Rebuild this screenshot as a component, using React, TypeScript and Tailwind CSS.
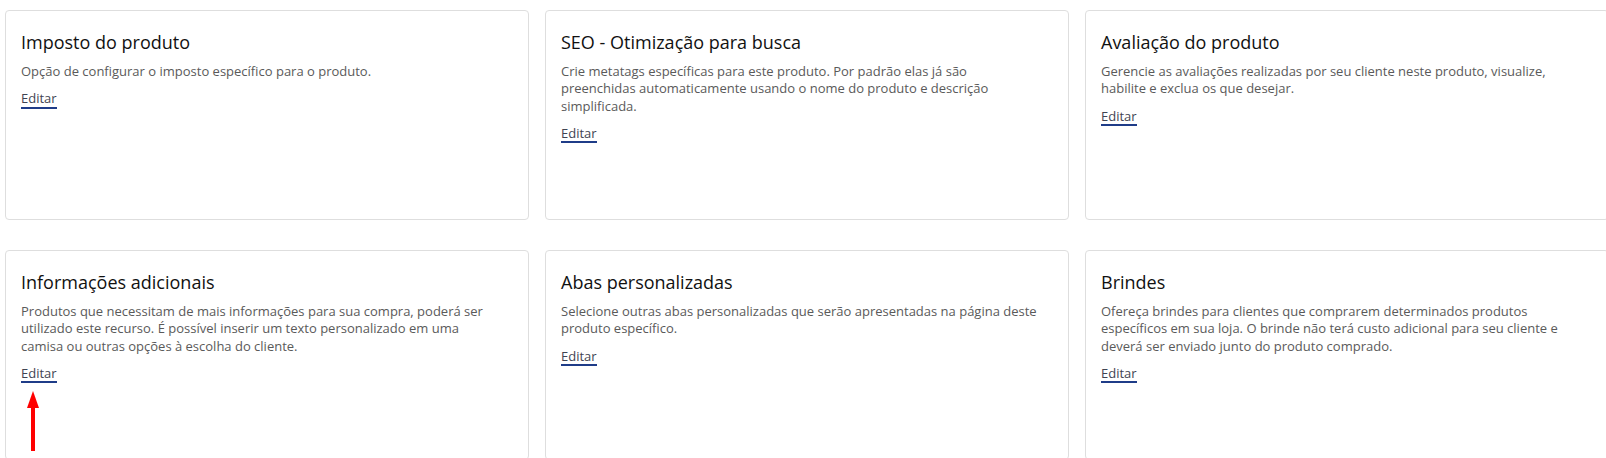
import React from "react";

type Option = {
  title: string;
  lines: string[];
};

// descriptions are kept line by line so every card breaks at the same words
const options: Option[] = [
  {
    title: "Imposto do produto",
    lines: ["Opção de configurar o imposto específico para o produto."],
  },
  {
    title: "SEO - Otimização para busca",
    lines: [
      "Crie metatags específicas para este produto. Por padrão elas já são",
      "preenchidas automaticamente usando o nome do produto e descrição",
      "simplificada.",
    ],
  },
  {
    title: "Avaliação do produto",
    lines: [
      "Gerencie as avaliações realizadas por seu cliente neste produto, visualize,",
      "habilite e exclua os que desejar.",
    ],
  },
  {
    title: "Informações adicionais",
    lines: [
      "Produtos que necessitam de mais informações para sua compra, poderá ser",
      "utilizado este recurso. É possível inserir um texto personalizado em uma",
      "camisa ou outras opções à escolha do cliente.",
    ],
  },
  {
    title: "Abas personalizadas",
    lines: [
      "Selecione outras abas personalizadas que serão apresentadas na página deste",
      "produto específico.",
    ],
  },
  {
    title: "Brindes",
    lines: [
      "Ofereça brindes para clientes que comprarem determinados produtos",
      "específicos em sua loja. O brinde não terá custo adicional para seu cliente e",
      "deverá ser enviado junto do produto comprado.",
    ],
  },
];

const OptionCard = ({ option, highlight }: { option: Option; highlight?: boolean }) => (
  <div className="relative h-[210px] rounded-[4px] border border-[#dedede] bg-white px-[15px] pt-[19px]">
    <h3 className="text-[18px] leading-[24px] font-normal text-[#111111]">{option.title}</h3>
    <p className="mt-[9px] whitespace-nowrap text-[13px] leading-[17.3px] text-[#5a5a5a]">
      {option.lines.map((line, i) => (
        <React.Fragment key={i}>
          {i > 0 && <br />}
          {line}
        </React.Fragment>
      ))}
    </p>
    <a
      href="#"
      className="mt-[10px] inline-block border-b-2 border-[#1f3c88] text-[13px] leading-[16.5px] text-[#3f4452]"
    >
      Editar
    </a>

    {highlight && (
      // red pointer under the "Editar" link
      <svg
        className="absolute left-[20px] top-[140px]"
        width="14"
        height="62"
        viewBox="0 0 14 62"
      >
        <polygon points="7,0 13,17 1,17" fill="#ff0000" />
        <rect x="5" y="16" width="4" height="44" fill="#ff0000" />
      </svg>
    )}
  </div>
);

export default function App() {
  return (
    <div
      className="min-h-screen w-full overflow-hidden bg-white pl-[5px] pt-[10px]"
      style={{ fontFamily: '"Open Sans", "Noto Sans", sans-serif' }}
    >
      <div className="grid grid-cols-[repeat(3,524px)] gap-x-[16px] gap-y-[30px]">
        {options.map((option, i) => (
          <OptionCard key={option.title} option={option} highlight={i === 3} />
        ))}
      </div>
    </div>
  );
}
